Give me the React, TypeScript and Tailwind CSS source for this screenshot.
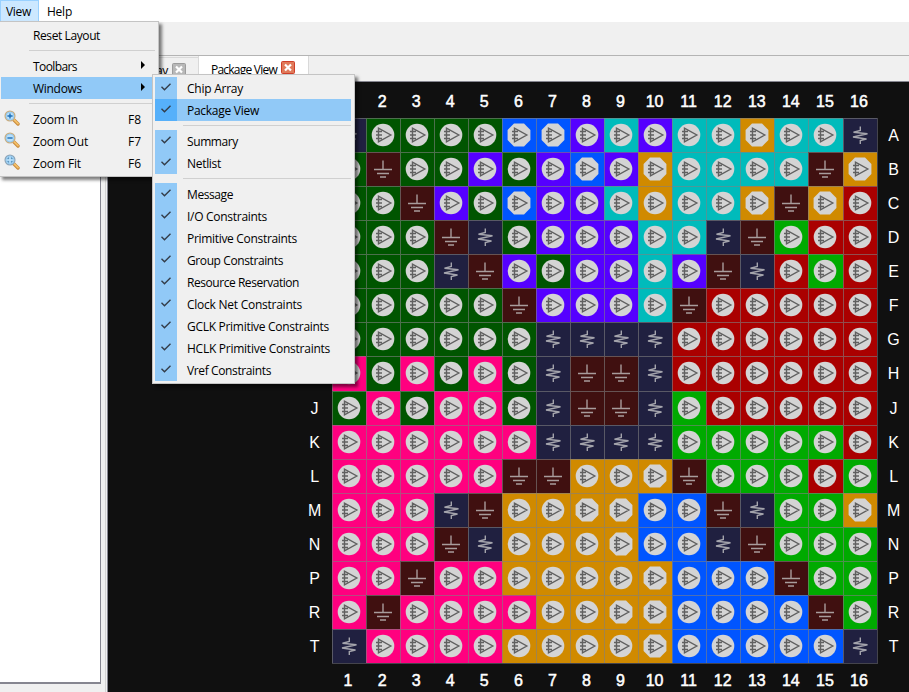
import { useLayoutEffect, useRef, useState } from "react";

const ROWS: [string, string][] = [
  ["A", "~DDDDbbPCPCCoCC~"],
  ["B", "D-DDPDPbPoCCCC-o"],
  ["C", "DD-PDbPPCOCCo-oR"],
  ["D", "DDD-~DPPPCC~-GRR"],
  ["E", "DDD~-PDPPCP-~RGR"],
  ["F", "DDDDD-PPPC-RRRRR"],
  ["G", "DDDDDD~~~~RRRRRR"],
  ["H", "KDKDKD~--~RRRRRR"],
  ["J", "DKDKKD~--~GRRRRR"],
  ["K", "KKKKKK~~~~GGGGGR"],
  ["L", "KKKKK--OOo-GGGRG"],
  ["M", "KKK~-OOooBB-~GGo"],
  ["N", "KKK-~OOOoBB~-GGG"],
  ["P", "KK-KKOOOOoBBB-GG"],
  ["R", "K-KKKKOOooBBBB-G"],
  ["T", "~KKKKOOOOoBBBBB~"],
];

const COLORS: Record<string, string> = {
  D: "bg-[#005500]",
  P: "bg-[#5500ff]",
  B: "bg-[#0055ff]",
  C: "bg-[#00bbbb]",
  O: "bg-[#d08a00]",
  R: "bg-[#aa0000]",
  G: "bg-[#00aa00]",
  K: "bg-[#ff007f]",
  "-": "bg-[#401010]",
  "~": "bg-[#202040]",
};

function Fit({ text, width, className = "" }: { text: string; width: number; className?: string }) {
  const ref = useRef<HTMLSpanElement>(null);
  const [spacing, setSpacing] = useState(0);
  useLayoutEffect(() => {
    if (ref.current) {
      const natural = ref.current.getBoundingClientRect().width;
      setSpacing((width - natural) / text.length);
    }
  }, []);
  return (
    <span ref={ref} className={"inline-block whitespace-pre " + className} style={{ letterSpacing: spacing }}>
      {text}
    </span>
  );
}

function Pin({ kind }: { kind: string }) {
  const octagon = kind !== kind.toUpperCase();
  return (
    <div className={"border-t border-l border-[#808080]/60 bg-clip-border " + COLORS[kind.toUpperCase()]}>
      <svg viewBox="-16 -16 33 33" className="block h-[33px] w-[33px]" fill="none">
        {kind === "-" && (
          <path d="M0 -8.5V0.5M-9 0.5H9M-6 4.5H6M-3 8H3" stroke="#a89c9c" strokeWidth="1.4" />
        )}
        {kind === "~" && (
          <path d="M0.3 -8.5V-4.5L-6.5 -2.8L7.5 -1.2L-7 2L6.5 4L0.3 5.5V9" stroke="#a4a4ac" strokeWidth="1.4" />
        )}
        {kind !== "-" && kind !== "~" && (
          <>
            {octagon ? (
              <path d="M-5 -11.4H5L11.4 -5V5L5 11.4H-5L-11.4 5V-5Z" fill="#d4d4d4" />
            ) : (
              <circle r="11.3" fill="#d4d4d4" />
            )}
            <path d="M-4.5 -6.8V6.8L7.8 0Z M-7 -3.5H-1M-7 0H-1M-7 3.5H-1" stroke="#606060" strokeWidth="1.4" />
          </>
        )}
      </svg>
    </div>
  );
}

function Numbers({ className }: { className: string }) {
  return (
    <div className={"ml-[223px] grid w-[545px] grid-cols-16 items-center text-center text-[16px] leading-none [-webkit-text-stroke:0.5px_white] " + className}>
      {ROWS.map((_, i) => (
        <span key={i}>{i + 1}</span>
      ))}
    </div>
  );
}

function Letters({ from = 0, className }: { from?: number; className: string }) {
  return (
    <div className={"grid h-[546px] shrink-0 grid-rows-16 items-center pt-px text-center text-[16px] leading-none " + className}>
      {ROWS.map(([l], i) => (
        <span key={l}>{i >= from && l}</span>
      ))}
    </div>
  );
}

function CloseIcon({ active }: { active?: boolean }) {
  return (
    <svg viewBox="0 0 14 13" className="h-[13px] w-[14px]">
      <rect x="0.5" y="0.5" width="13" height="12" rx="1" fill={active ? "#e07a5a" : "#b8b8b8"} stroke={active ? "#cf3f2a" : "#9c9c9c"} />
      <path d="M4 3.5L10 9.5M10 3.5L4 9.5" stroke="#fff" strokeWidth="2.2" />
    </svg>
  );
}

function Magnifier({ kind }: { kind: string }) {
  return (
    <svg viewBox="0 0 16 16" className="h-4 w-4" fill="none">
      <path d="M9.5 9.5L14 14" stroke="#c88a3c" strokeWidth="3.4" strokeLinecap="round" />
      <path d="M10 9.6L14 13.6" stroke="#f4c069" strokeWidth="1.8" strokeLinecap="round" />
      <circle cx="6" cy="6" r="4.9" fill="#b9e0fa" stroke={kind === "fit" ? "#8fa6b8" : "#c9ad80"} strokeWidth="1.3" />
      <circle cx="6" cy="6" r="4" stroke="#8cc4ee" strokeWidth="0.8" />
      {kind === "in" && <path d="M3.4 6H8.6M6 3.4V8.6" stroke="#1f6fb8" strokeWidth="1.4" />}
      {kind === "out" && <path d="M3.4 6H8.6" stroke="#1f6fb8" strokeWidth="1.4" />}
      {kind === "fit" && <path d="M4 5.2V4H5.2M6.8 4H8V5.2M8 6.8V8H6.8M5.2 8H4V6.8" stroke="#3f7fae" />}
    </svg>
  );
}

function Separator({ className }: { className: string }) {
  return (
    <div className="h-[9px] pt-1">
      <div className={"h-px bg-[#d0d0d0] " + className} />
    </div>
  );
}

function MenuRow({ text, width, icon, shortcut, arrow, active }: { text: string; width: number; icon?: string; shortcut?: string; arrow?: boolean; active?: boolean }) {
  return (
    <div className={"flex h-[22px] items-center " + (active ? "bg-[#91c9f7]" : "")}>
      <div className="flex w-8 pl-[3px] pb-0.5">{icon && <Magnifier kind={icon} />}</div>
      <Fit text={text} width={width} className="pt-0.5" />
      <div className="mr-[16px] ml-auto flex items-center">
        {shortcut && <Fit text={shortcut} width={13} className="pt-0.5" />}
        {arrow && (
          <svg viewBox="0 0 4 8" className="-mr-1 mb-0.5 h-2 w-1">
            <path d="M0 0L4 4L0 8Z" fill="#000" />
          </svg>
        )}
      </div>
    </div>
  );
}

function CheckRow({ text, width, active }: { text: string; width: number; active?: boolean }) {
  return (
    <div className={"mr-[3px] flex h-[22px] items-center " + (active ? "bg-[#91c9f7]" : "")}>
      <div className={"mr-[10px] flex h-[22px] w-[22px] items-center justify-center " + (active ? "bg-[#56b0fa]" : "bg-[#91c9f7]")}>
        <svg viewBox="0 0 10 8" className="mb-0.5 h-2 w-[10px]" fill="none">
          <path d="M0.5 3.8L3.5 6.8L9.5 0.8" stroke="#333c48" strokeWidth="1.4" />
        </svg>
      </div>
      <Fit text={text} width={width} className="pt-0.5" />
    </div>
  );
}

export default function App() {
  return (
    <div className="relative flex h-[692px] w-[909px] flex-col overflow-hidden bg-[#f0f0f0] font-['Open_Sans','Noto_Sans',sans-serif] text-[12px] leading-[16px] text-black">
      <div className="flex h-[22px] shrink-0 bg-white">
        <div className="flex h-[22px] w-[39px] items-center border border-[#99d1ff] bg-[#cce8ff] pt-0.5 pl-[5px]">
          <Fit text="View" width={25} />
        </div>
        <div className="flex items-center pt-0.5 pl-2">
          <Fit text="Help" width={25} />
        </div>
      </div>
      <div className="h-[34px] shrink-0 border-b border-[#b4b4b4]" />
      <div className="flex min-h-0 flex-1">
        <div className="mb-2 w-[101px] shrink-0 border-r border-b-2 border-[#868690] bg-white" />
        <div className="ml-1 flex w-[804px] flex-col border-l border-[#d4d4d4]">
          <div className="flex h-[25px] shrink-0 items-end pl-[34px]">
            <div className="flex h-[24px] w-[58px] items-center justify-end gap-1 border-t border-[#d9d9d9] pr-3">
              <Fit text="Chip Array" width={55} className="shrink-0 pt-0.5" />
              <span className="shrink-0">
                <CloseIcon />
              </span>
            </div>
            <div className="flex h-[25px] w-[111px] items-center gap-[4px] border-x border-[#d9d9d9] bg-white pb-0.5 pl-3">
              <Fit text="Package View" width={66} className="pt-1" />
              <CloseIcon active />
            </div>
          </div>
          <div className="ml-px flex-1 border-t border-l border-[#868690] bg-[#101010] pt-[3px] font-['Liberation_Sans',sans-serif] text-white">
            <Numbers className="h-[33px]" />
            <div className="flex pl-[189.6px]">
              <Letters from={8} className="w-[34px]" />
              <div className="grid h-[546px] w-[546px] shrink-0 grid-cols-[repeat(16,34.0625px)] grid-rows-[repeat(16,34.0625px)] border-r border-b border-[#44444c]">
                {ROWS.map(([l, cells]) => cells.split("").map((c, i) => <Pin key={l + i} kind={c} />))}
              </div>
              <Letters className="w-8" />
            </div>
            <Numbers className="h-[34px]" />
          </div>
        </div>
      </div>

      <div className="absolute top-[21px] -left-px h-[156px] w-[160px] border border-[#c4c4c4] bg-[#f0f0f0] px-px pt-0.5 shadow-[3px_3px_3px_rgba(0,0,0,0.5)]">
        <MenuRow text="Reset Layout" width={67} />
        <Separator className="ml-7 mr-0.5" />
        <MenuRow text="Toolbars" width={44} arrow />
        <MenuRow text="Windows" width={49} arrow active />
        <Separator className="ml-7 mr-0.5" />
        <MenuRow text="Zoom In" width={45} icon="in" shortcut="F8" />
        <MenuRow text="Zoom Out" width={55} icon="out" shortcut="F7" />
        <MenuRow text="Zoom Fit" width={48} icon="fit" shortcut="F6" />
      </div>

      <div className="absolute top-[74px] left-[152px] h-[310px] w-[203px] border border-[#c4c4c4] bg-[#f0f0f0] pt-0.5 pl-0.5 shadow-[3px_3px_3px_rgba(0,0,0,0.5)]">
        <CheckRow text="Chip Array" width={56} />
        <CheckRow text="Package View" width={72} active />
        <Separator className="ml-7 mr-[3px]" />
        <CheckRow text="Summary" width={51} />
        <CheckRow text="Netlist" width={34} />
        <Separator className="ml-7 mr-[3px]" />
        <CheckRow text="Message" width={46} />
        <CheckRow text="I/O Constraints" width={80} />
        <CheckRow text="Primitive Constraints" width={110} />
        <CheckRow text="Group Constraints" width={96} />
        <CheckRow text="Resource Reservation" width={112} />
        <CheckRow text="Clock Net Constraints" width={115} />
        <CheckRow text="GCLK Primitive Constraints" width={142} />
        <CheckRow text="HCLK Primitive Constraints" width={143} />
        <CheckRow text="Vref Constraints" width={84} />
      </div>
    </div>
  );
}
